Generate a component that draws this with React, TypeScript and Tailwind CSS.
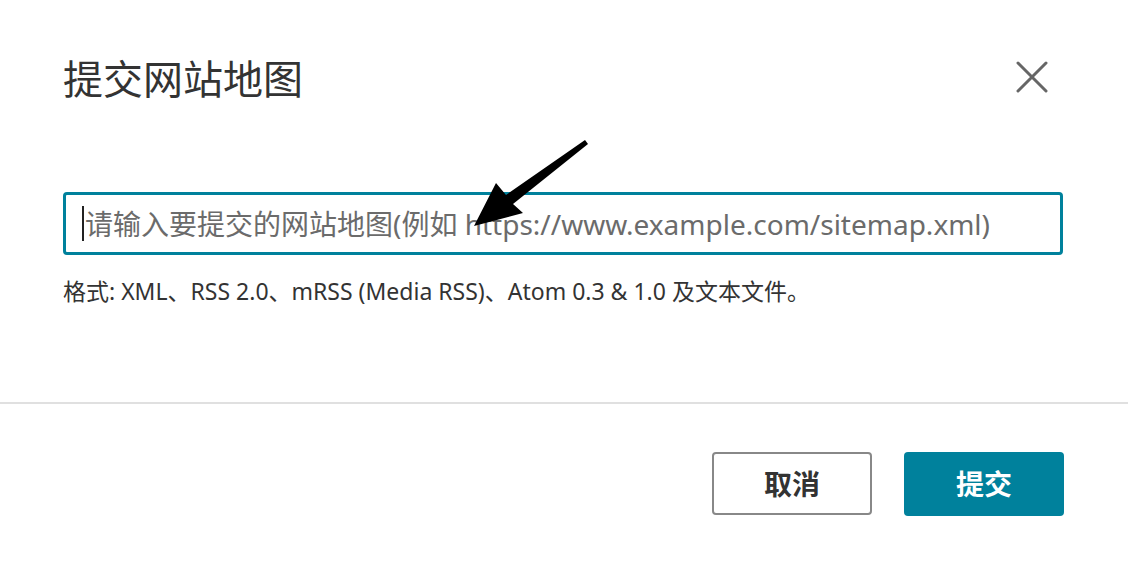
export default function App() {
  return (
    <div
      className="relative w-[1128px] h-[564px] bg-white overflow-hidden"
      style={{ fontFamily: '"Noto Sans", "Noto Sans CJK SC", sans-serif' }}
    >
      {/* Header */}
      <div className="flex items-center justify-between pl-[63px] pr-[72px] pt-[55px]">
        <h2 className="text-[40px] leading-[48px] text-[#333] font-normal">提交网站地图</h2>
        <button className="w-[48px] h-[48px] flex items-center justify-center -mt-1">
          <svg width="32" height="32" viewBox="0 0 32 32" fill="none">
            <path d="M2 2 L30 30 M30 2 L2 30" stroke="#666" strokeWidth="3" strokeLinecap="round" />
          </svg>
        </button>
      </div>

      {/* Body */}
      <div className="pl-[63px] pr-[65px]">
        <div className="mt-[89px] w-[1000px] h-[63px] border-[3px] border-[#00819c] rounded-[4px] flex items-center pl-[16px]">
          <span className="w-[2px] h-[35px] bg-[#222] mr-[1px]" />
          <span className="text-[28px] leading-[36px] text-[#6b6b6b] whitespace-nowrap">
            请输入要提交的网站地图(例如 https://www.example.com/sitemap.xml)
          </span>
        </div>
        <p className="mt-[22px] text-[23px] leading-[28px] text-[#333] whitespace-nowrap">
          格式: XML、RSS 2.0、mRSS (Media RSS)、Atom 0.3 &amp; 1.0 及文本文件。
        </p>
      </div>

      {/* Divider */}
      <div className="mt-[97px] border-t-2 border-[#e0e0e0]" />

      {/* Footer */}
      <div className="flex justify-end gap-[32px] pr-[64px] mt-[48px]">
        <button className="w-[160px] h-[63px] border-2 border-[#888] rounded-[4px] bg-white text-[28px] font-bold text-[#333]">
          取消
        </button>
        <button className="w-[160px] h-[64px] rounded-[4px] bg-[#00819c] text-[28px] font-bold text-white">
          提交
        </button>
      </div>

      {/* Annotation arrow */}
      <svg className="absolute left-0 top-0 pointer-events-none" width="1128" height="564" viewBox="0 0 1128 564">
        <polygon
          points="474,226 496,183 506,195 585,140 588,144 513,204 523,213"
          fill="#000"
        />
      </svg>
    </div>
  );
}
